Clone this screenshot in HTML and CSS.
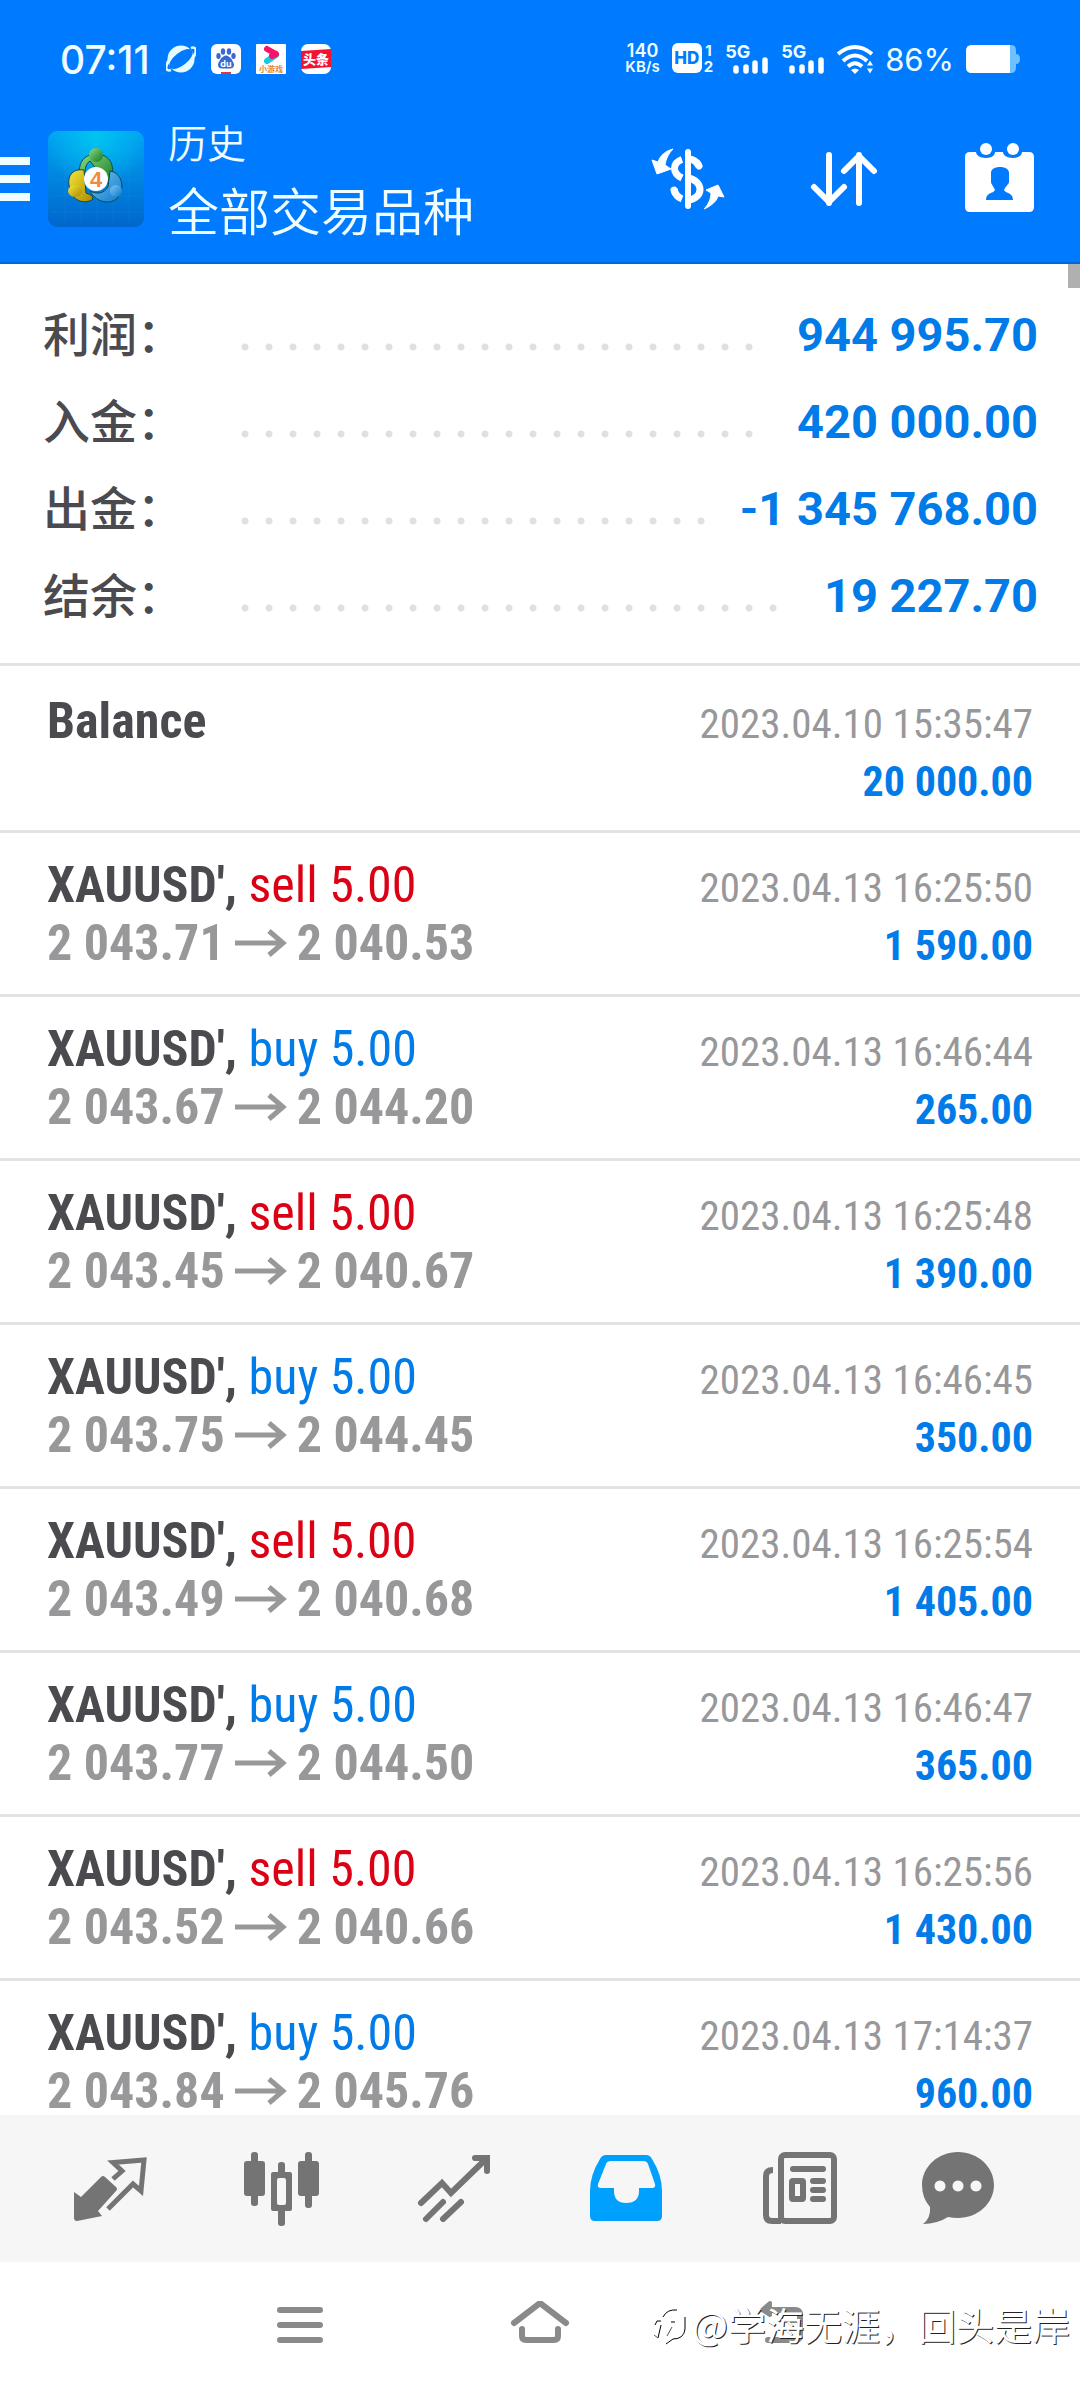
FILE: index.html
```
<!DOCTYPE html>
<html lang="zh-CN">
<head>
<meta charset="utf-8">
<meta name="viewport" content="width=device-width, initial-scale=1">
<title>历史</title>
<link rel="stylesheet" href="styles.css">
</head>
<body>
<svg class="defs" width="0" height="0" aria-hidden="true">
  <symbol id="arrow" viewBox="0 0 52 28">
    <path d="M0 14H48M34 2L48 14L34 26" fill="none" stroke="currentColor" stroke-width="5"/>
  </symbol>
</svg>

<header class="top">
  <div class="status">
    <time class="clock">07:11</time>
    <div class="notices">
      <svg viewBox="0 0 30 30" width="30" height="30"><circle cx="15" cy="15" r="13.500" fill="#e6fbff"/><ellipse cx="15" cy="15" rx="14" ry="6.500" transform="rotate(-38 15 15)" fill="#007bff"/><path d="M3 16C-1 22-1 28 5 26M27 14C31 8 31 2 25 4" fill="none" stroke="#e6fbff" stroke-width="2.500"/></svg>
      <svg viewBox="0 0 30 30" width="30" height="30"><rect width="30" height="30" rx="6" fill="#fff"/><g fill="#3a67d0"><ellipse cx="7.500" cy="12" rx="2.200" ry="3"/><ellipse cx="12" cy="7.500" rx="2.200" ry="3.200"/><ellipse cx="18" cy="7.500" rx="2.200" ry="3.200"/><ellipse cx="22.500" cy="12" rx="2.200" ry="3"/><path d="M15 11.500c4 0 8 7 8 9.500s-2 3.500-4 3.500h-8c-2 0-4-1-4-3.500s4-9.500 8-9.500z"/></g><text x="15" y="22.500" text-anchor="middle" class="glyph-du">du</text><rect x="10" y="28" width="10" height="2" fill="#e33"/></svg>
      <svg viewBox="0 0 30 30" width="30" height="30"><rect width="30" height="30" rx="1" fill="#fff"/><path d="M11 17L20 11" stroke="#19c8e8" stroke-width="6" stroke-linecap="round"/><path d="M11 5L20 10M20 10L16 12" stroke="#f5146b" stroke-width="6" stroke-linecap="round"/><text x="15" y="28" text-anchor="middle" class="glyph-game">小游戏</text></svg>
      <svg viewBox="0 0 30 30" width="30" height="30"><rect width="30" height="30" rx="7" fill="#fff"/><path d="M0 7L30 5V23L0 25z" fill="#f0142f"/><text x="15" y="20" text-anchor="middle" class="glyph-news">头条</text></svg>
    </div>
    <div class="network">
      <span class="rate"><span class="rate-value">140</span><span class="rate-unit">KB/s</span></span>
      <span class="hd"><span class="hd-box">HD</span><span class="hd-sims"><span>1</span><span>2</span></span></span>
      <span class="cell"><span class="cell-type">5G</span><svg viewBox="0 0 36 18" width="36" height="18"><path d="M3 12v3M13 11v4M22 7v8M32 4v11" fill="none" stroke="#fff" stroke-width="5.500" stroke-linecap="round"/></svg></span>
      <span class="cell"><span class="cell-type">5G</span><svg viewBox="0 0 36 18" width="36" height="18"><path d="M3 12v3M13 11v4M22 7v8M32 4v11" fill="none" stroke="#fff" stroke-width="5.500" stroke-linecap="round"/></svg></span>
      <svg viewBox="0 0 36 30" width="36" height="30"><g fill="none" stroke="#fff" stroke-width="4"><path d="M1 10Q18 -4 35 10"/><path d="M6 17Q18 6 30 17"/><path d="M11 22.500Q18 16 25 22.500"/></g><path d="M14 26q4-3 8 0l-4 4z" fill="#fff"/><path d="M30 21.500l3-5 3 5zM30 24.500l3 5 3-5z" fill="#e6fbff"/></svg>
      <span class="percent">86%</span>
      <svg viewBox="0 0 54 28" width="54" height="28"><path d="M6 0H46Q50 0 50 6V9Q54 9 54 14Q54 19 50 19V22Q50 28 45 28H6Q0 28 0 22V6Q0 0 6 0z" fill="#6fc0ff"/><path d="M6 0H44V28H6Q0 28 0 22V6Q0 0 6 0z" fill="#fff"/></svg>
    </div>
  </div>

  <div class="appbar">
    <button class="menu" aria-label="菜单"><span></span><span></span><span></span></button>
    <svg class="logo" viewBox="0 0 96 96" width="96" height="96">
      <defs>
        <linearGradient id="sky" x1="0" y1="0" x2="0" y2="1"><stop offset="0" stop-color="#00a2f2"/><stop offset="1" stop-color="#0066cc"/></linearGradient>
        <radialGradient id="glow" cx="50%" cy="5%" r="55%"><stop offset="0" stop-color="#00c4f0"/><stop offset="1" stop-color="#00c4f0" stop-opacity="0"/></radialGradient>
        <linearGradient id="green" x1="0" y1="0" x2="1" y2="1"><stop offset="0" stop-color="#8edb7c"/><stop offset="1" stop-color="#117a2a"/></linearGradient>
        <linearGradient id="gold" x1="0" y1="0" x2="1" y2="1"><stop offset="0" stop-color="#f6e63a"/><stop offset="1" stop-color="#a88a00"/></linearGradient>
        <linearGradient id="blue" x1="0" y1="0" x2="1" y2="1"><stop offset="0" stop-color="#7cc8f0"/><stop offset="1" stop-color="#0b78cc"/></linearGradient>
      </defs>
      <rect width="96" height="96" rx="9" fill="url(#sky)"/>
      <rect width="96" height="96" rx="9" fill="url(#glow)"/>
      <path d="M17 4V92M33 4V92M49 4V92M65 4V92M81 4V92M4 17H92M4 33H92M4 49H92M4 65H92M4 81H92" stroke="#2fb0ff" stroke-opacity=".12"/>
      <g stroke="#0b4a52" stroke-width="1">
        <path d="M32 46C29 30 38 23 48 23C60 23 67 32 64 46C63 54 58 55 56 48L42 30C36 34 38 40 36 46z" fill="url(#green)"/>
        <path d="M36 39C24 37 18 46 22 58C24 68 34 74 44 69C46 66 44 64 38 62z" fill="url(#gold)"/>
        <path d="M62 40C74 42 76 56 72 63C66 76 48 72 42 60C50 64 56 62 60 56z" fill="url(#blue)"/>
      </g>
      <ellipse cx="48" cy="24" rx="7" ry="7" fill="url(#green)"/>
      <ellipse cx="27" cy="60" rx="7" ry="6" fill="url(#gold)"/>
      <ellipse cx="68" cy="60" rx="6" ry="6" fill="url(#blue)"/>
      <circle cx="48" cy="48" r="12" fill="#fff"/>
      <text x="48" y="56" text-anchor="middle" class="glyph-four">4</text>
    </svg>
    <div class="titles">
      <p class="section">历史</p>
      <h1 class="symbol">全部交易品种</h1>
    </div>
    <div class="actions">
      <button aria-label="交易品种">
        <svg viewBox="0 0 96 96" width="96" height="96" fill="none" stroke="#fff"><path d="M48 21V75" stroke-width="6" stroke-linecap="round"/><path d="M59 35C57 31 53 28 48 28M42 28.500C32 32 32 42 42 47M48 47C64 50 64 67 48 69M42 68C37 66 35 63 34 58" stroke-width="7"/><path d="M57 32L59 35M34 59L35 62" stroke-width="7" stroke-linecap="round"/><path d="M33 18C25 20 20 25 18 31L12 29L17 43L31 38L25 34C26 27 29 22 33 18z" fill="#fff"/><path d="M64 78C71 75 77 70 78 65L84 66L78 54L66 59L71 62C71 68 68 74 64 78z" fill="#fff"/></svg>
      </button>
      <button aria-label="排序">
        <svg viewBox="0 0 96 96" width="96" height="96" fill="none" stroke="#fff" stroke-width="6" stroke-linecap="round" stroke-linejoin="round"><path d="M33 72V24M18 56L33 71L48 56M63 72V24M48 40L63 25L78 40"/></svg>
      </button>
      <button aria-label="日期">
        <svg viewBox="0 0 96 96" width="96" height="96" fill="#fff"><path d="M18 21H24C24 24 28 27 34 27C40 27 43 24 43 21H51C51 24 55 27 61 27C67 27 70 24 70 21H77Q82 21 82 26V76Q82 81 77 81H18Q13 81 13 76V26Q13 21 18 21z"/><circle cx="34" cy="18" r="6"/><circle cx="61" cy="18" r="6"/><path d="M48 36C53 36 57 38 57 42V51C57 53 53 56 52 59C54 63 61 61 61 69H34C34 61 41 63 43 59C42 56 39 53 39 51V42C39 38 43 36 48 36z" fill="#007bff"/></svg>
      </button>
    </div>
  </div>
</header>

<main class="history">
  <div class="thumb"></div>
  <dl class="summary">
    <div><dt>利润：</dt><dd>944 995.70</dd></div>
    <div><dt>入金：</dt><dd>420 000.00</dd></div>
    <div><dt>出金：</dt><dd>-1 345 768.00</dd></div>
    <div><dt>结余：</dt><dd>19 227.70</dd></div>
  </dl>
  <ul class="deals">
    <li class="balance"><span class="name">Balance</span><time>2023.04.10 15:35:47</time><span class="prices">&nbsp;</span><b class="profit">20 000.00</b></li>
    <li><span class="name">XAUUSD', <span class="sell">sell 5.00</span></span><time>2023.04.13 16:25:50</time><span class="prices">2 043.71<svg><use href="#arrow"/></svg>2 040.53</span><b class="profit">1 590.00</b></li>
    <li><span class="name">XAUUSD', <span class="buy">buy 5.00</span></span><time>2023.04.13 16:46:44</time><span class="prices">2 043.67<svg><use href="#arrow"/></svg>2 044.20</span><b class="profit">265.00</b></li>
    <li><span class="name">XAUUSD', <span class="sell">sell 5.00</span></span><time>2023.04.13 16:25:48</time><span class="prices">2 043.45<svg><use href="#arrow"/></svg>2 040.67</span><b class="profit">1 390.00</b></li>
    <li><span class="name">XAUUSD', <span class="buy">buy 5.00</span></span><time>2023.04.13 16:46:45</time><span class="prices">2 043.75<svg><use href="#arrow"/></svg>2 044.45</span><b class="profit">350.00</b></li>
    <li><span class="name">XAUUSD', <span class="sell">sell 5.00</span></span><time>2023.04.13 16:25:54</time><span class="prices">2 043.49<svg><use href="#arrow"/></svg>2 040.68</span><b class="profit">1 405.00</b></li>
    <li><span class="name">XAUUSD', <span class="buy">buy 5.00</span></span><time>2023.04.13 16:46:47</time><span class="prices">2 043.77<svg><use href="#arrow"/></svg>2 044.50</span><b class="profit">365.00</b></li>
    <li><span class="name">XAUUSD', <span class="sell">sell 5.00</span></span><time>2023.04.13 16:25:56</time><span class="prices">2 043.52<svg><use href="#arrow"/></svg>2 040.66</span><b class="profit">1 430.00</b></li>
    <li><span class="name">XAUUSD', <span class="buy">buy 5.00</span></span><time>2023.04.13 17:14:37</time><span class="prices">2 043.84<svg><use href="#arrow"/></svg>2 045.76</span><b class="profit">960.00</b></li>
  </ul>
</main>

<nav class="tabs">
  <button aria-label="行情"><svg viewBox="0 0 96 96" width="96" height="96"><path d="M51 38L60 30L51 21.500L82 19L79 50L71 43L46 68" fill="none" stroke="currentColor" stroke-width="5"/><path d="M12 51L19 56L39 36Q41 34 43 36L54 46Q56 48 54 50L36 70L40 75L15 80Q12 80 12 77z" fill="currentColor"/></svg></button>
  <button aria-label="图表"><svg viewBox="0 0 96 96" width="96" height="96" fill="currentColor"><rect x="10" y="20" width="21" height="35" rx="3"/><rect x="17" y="11" width="7" height="54" rx="3"/><rect x="64" y="20" width="21" height="35" rx="3"/><rect x="71" y="11" width="7" height="56" rx="3"/><rect x="44" y="21" width="7" height="16" rx="3"/><rect x="44" y="66" width="7" height="19" rx="3"/><path fill-rule="evenodd" d="M39 31H56Q58 31 58 33V68Q58 70 56 70H39Q37 70 37 68V33Q37 31 39 31zM45 37Q43 37 43 39V62Q43 64 45 64H50Q52 64 52 62V39Q52 37 50 37z"/></svg></button>
  <button aria-label="交易"><svg viewBox="0 0 96 96" width="96" height="96" fill="none" stroke="currentColor" stroke-width="6" stroke-linecap="round"><path d="M15 62L36 42L45 52L80 18M69 17H81V30M20 78L37 61M37 78L55 61"/></svg></button>
  <button class="current" aria-label="历史"><svg viewBox="0 0 96 96" width="96" height="96" fill="currentColor"><path fill-rule="evenodd" d="M28 14H68Q72 14 74 18Q84 34 84 50V75Q84 80 79 80H17Q12 80 12 75V50Q12 34 22 18Q24 14 28 14zM33 20Q29 20 28 23L20 43Q19 47 23 47H36V50Q36 62 48 62Q61 62 61 50V47H74Q78 47 77 43L70 23Q69 20 65 20z"/></svg></button>
  <button aria-label="新闻"><svg viewBox="0 0 96 96" width="96" height="96" fill="none" stroke="currentColor" stroke-width="6"><rect x="31" y="14" width="53" height="66" rx="4"/><path d="M23 29Q16 29 16 35V74Q16 80 22 80H31"/><path d="M43 28H73M63 40H73M63 49H73M63 58H73" stroke-linecap="round"/><rect x="42" y="40" width="11" height="18" rx="1"/></svg></button>
  <button aria-label="消息"><svg viewBox="0 0 96 96" width="96" height="96" fill="currentColor"><path fill-rule="evenodd" d="M36 11C56 11 72 26 72 44C72 62 56 77 36 77Q31 77 26 76Q15 83 1 83Q9 77 8 66Q0 57 0 44C0 26 16 11 36 11zM18 39.500a5.500 5.500 0 1 0 .01 0zM36 39.500a5.500 5.500 0 1 0 .01 0zM54 39.500a5.500 5.500 0 1 0 .01 0z"/></svg></button>
</nav>

<div class="system">
  <button aria-label="最近任务"><svg viewBox="0 0 64 48" width="64" height="48" stroke="currentColor" stroke-width="6" stroke-linecap="round"><path d="M12 9H52M12 24H52M12 39H52"/></svg></button>
  <button aria-label="主屏幕"><svg viewBox="0 0 64 48" width="64" height="48" fill="none" stroke="currentColor" stroke-width="6" stroke-linecap="round"><path d="M6 22L32 2L58 22M14 28V35Q14 39 18 39H46Q50 39 50 35V28"/></svg></button>
  <button aria-label="返回"><svg viewBox="0 0 64 48" width="64" height="48" fill="none" stroke="currentColor" stroke-width="6" stroke-linecap="round"><path d="M24 9H47Q52 9 52 14V34Q52 39 47 39H20"/><path d="M22 2L14 9L22 14z" fill="currentColor" stroke-width="4" stroke-linejoin="round"/></svg></button>
  <p class="mark"><svg viewBox="0 0 36 42" width="36" height="42" fill="none" stroke="#000" stroke-width="1"><path d="M2 22L4 18H8M10 14Q14 6 24 7M32 14V26Q31 36 20 36L13 41M5 35L8 22M18 19H22"/><path d="M5 35L1 32M14 33L19 24" stroke="#555"/></svg>@学海无涯，回头是岸</p>
</div>
</body>
</html>
```
FILE: styles.css
```
* {
  box-sizing: border-box;
}

body {
  margin: 0;
  height: 100vh;
  display: flex;
  flex-direction: column;
  background: #fff;
  color: #4a4a4f;
  font-family: Roboto, "Noto Sans CJK SC", sans-serif;
}

button {
  margin: 0;
  padding: 0;
  border: 0;
  background: none;
  color: inherit;
  display: flex;
  align-items: center;
  justify-content: center;
}

p, h1, dl, dd, ul {
  margin: 0;
  padding: 0;
}

svg {
  display: block;
  flex: none;
}

.defs {
  position: absolute;
}

/* Header */
.top {
  flex: none;
  background: #007bff;
  border-bottom: 2px solid #0069d9;
  color: #f0fdff;
}

.status {
  height: 96px;
  padding: 22px 60px 0;
  display: flex;
  align-items: center;
  font-family: Inter, "Noto Sans CJK SC", sans-serif;
}

.clock {
  font-size: 39px;
  font-weight: 500;
}

.notices {
  display: flex;
  gap: 15px;
  margin-left: 16px;
}

.glyph-du {
  font: 700 9px Inter, sans-serif;
  fill: #fff;
}

.glyph-game {
  font: 700 8px "Noto Sans CJK SC", sans-serif;
  fill: #e58a2a;
}

.glyph-news {
  font: 900 13px "Noto Sans CJK SC", sans-serif;
  fill: #fff;
}

.glyph-four {
  font: 700 22px "Liberation Sans", sans-serif;
  fill: #f08a3c;
}

.network {
  margin-left: auto;
  display: flex;
  align-items: center;
  gap: 12px;
}

.rate {
  display: flex;
  flex-direction: column;
  align-items: center;
  font-weight: 600;
}

.rate-value {
  font-size: 18px;
  line-height: 16px;
}

.rate-unit {
  font-size: 15px;
  line-height: 16px;
}

.hd {
  display: flex;
  gap: 2px;
}

.hd-box {
  width: 30px;
  height: 30px;
  border-radius: 6px;
  background: #fff;
  color: #007bff;
  font-size: 17px;
  font-weight: 800;
  line-height: 30px;
  text-align: center;
}

.hd-sims {
  display: flex;
  flex-direction: column;
  align-items: center;
  font-size: 15px;
  font-weight: 700;
  line-height: 16px;
}

.cell {
  display: grid;
  width: 44px;
  height: 30px;
}

.cell > * {
  grid-area: 1 / 1;
}

.cell-type {
  font-size: 18px;
  font-weight: 700;
  line-height: 16px;
}

.cell svg {
  place-self: end;
}

.percent {
  font-size: 31px;
}

.appbar {
  height: 166px;
  display: flex;
  align-items: center;
}

.menu {
  flex-direction: column;
  align-items: flex-start;
  gap: 10px;
  width: 48px;
}

.menu span {
  width: 30px;
  height: 8px;
  background: #f0fdff;
}

.titles {
  margin-left: 24px;
  padding-bottom: 4px;
  font-family: "Noto Sans CJK SC", sans-serif;
}

.section {
  font-size: 39px;
  font-weight: 350;
  line-height: 64px;
}

.symbol {
  font-size: 51px;
  font-weight: 350;
  line-height: 72px;
}

.actions {
  margin-left: auto;
  padding-right: 2px;
  display: flex;
}

.actions button {
  width: 156px;
  height: 96px;
}

/* History list */
.history {
  flex: 1;
  min-height: 0;
  overflow-y: auto;
  scrollbar-width: none;
  position: relative;
}

.thumb {
  position: absolute;
  top: 0;
  right: 0;
  width: 12px;
  height: 24px;
  background: #b0b0b0;
}

.summary {
  padding: 26px 42px 25px 43px;
  border-bottom: 3px solid #e3e3e3;
}

.summary div {
  display: flex;
  height: 87px;
}

.summary div::after {
  content: "";
  order: 1;
  flex: 1;
  background: radial-gradient(circle at 4px 57px, #e0e0e0 3px, transparent 4px) 0 0 / 24px 87px repeat-x;
}

.summary dt {
  width: 198px;
  font-family: "Noto Sans CJK SC", sans-serif;
  font-size: 47px;
  font-weight: 500;
  line-height: 84px;
}

.summary dd {
  order: 2;
  padding-left: 34px;
  color: #007be8;
  font-size: 47px;
  font-weight: 700;
  line-height: 90px;
}

.deals {
  list-style: none;
  font-family: "Roboto Condensed", "Noto Sans CJK SC", sans-serif;
}

.deals li {
  display: grid;
  grid-template-columns: 1fr auto;
  grid-template-rows: 58px 58px;
  align-items: baseline;
  padding: 23px 47px 22px;
  border-bottom: 3px solid #e3e3e3;
  line-height: 58px;
}

.deals .balance {
  padding-top: 26px;
}

.deals time {
  color: #98989a;
  font-size: 41px;
}

.name, .prices {
  font-size: 50px;
  font-weight: 700;
}

.name span {
  font-weight: 400;
}

.sell {
  color: #dc0014;
}

.buy {
  color: #007be8;
}

.prices {
  display: flex;
  align-items: center;
  color: #98989a;
}

.prices svg {
  width: 52px;
  height: 28px;
  margin: 0 10px;
}

.profit {
  color: #007be8;
  font-size: 42px;
  text-align: right;
}

/* Bottom bars */
.tabs {
  flex: none;
  height: 147px;
  padding: 0 24px;
  display: grid;
  grid-template-columns: repeat(6, 1fr);
  background: #f6f6f6;
  color: #747474;
}

.tabs .current {
  color: #00a0ff;
}

.system {
  flex: none;
  height: 126px;
  display: grid;
  grid-template-columns: repeat(3, 240px);
  justify-content: center;
  position: relative;
  color: #8a8a8a;
}

.mark {
  position: absolute;
  right: 10px;
  bottom: 37px;
  display: flex;
  align-items: center;
  gap: 3px;
  color: #fff;
  font-family: "Noto Sans CJK SC", sans-serif;
  font-size: 38px;
  font-weight: 400;
  text-shadow: 1px 1px 0 #222;
}
```
